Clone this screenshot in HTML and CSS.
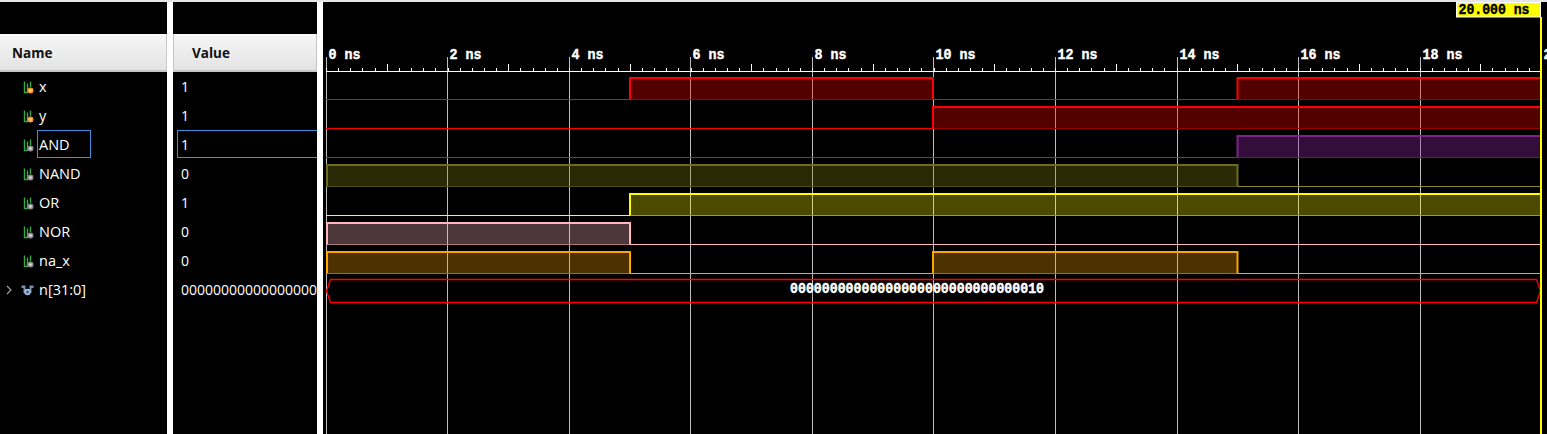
FILE: index.html
```html
<!DOCTYPE html>
<html>
<head>
<meta charset="utf-8">
<title>Waveform</title>
<link rel="stylesheet" href="styles.css">
</head>
<body>
<div class="topbar"></div>
<div class="main">
  <div class="col names">
    <div class="pad"></div>
    <div class="hdr">Name</div>
    <ul class="rows">
      <li class="row n"><span class="exp"></span>
        <svg class="ico" viewBox="0 0 11 13" width="11" height="13"><path class="g" d="M1.5 0.5V11.5H4.5V2.5M7.5 0.5V6"/><circle class="oin" cx="7.5" cy="9.5" r="3"/><path class="vmark" d="M6.3 8.5 7.5 10.9 8.7 8.5"/></svg>
        <span class="nm">x</span></li>
      <li class="row n"><span class="exp"></span>
        <svg class="ico" viewBox="0 0 11 13" width="11" height="13"><path class="g" d="M1.5 0.5V11.5H4.5V2.5M7.5 0.5V6"/><circle class="oin" cx="7.5" cy="9.5" r="3"/><path class="vmark" d="M6.3 8.5 7.5 10.9 8.7 8.5"/></svg>
        <span class="nm">y</span></li>
      <li class="row n"><span class="exp"></span>
        <svg class="ico" viewBox="0 0 11 13" width="11" height="13"><path class="g" d="M1.5 0.5V11.5H4.5V2.5M7.5 0.5V6"/><circle class="oout" cx="7.5" cy="9.5" r="3"/><circle class="odot" cx="7.5" cy="9.5" r="1.3"/></svg>
        <span class="nm sel">AND</span></li>
      <li class="row n"><span class="exp"></span>
        <svg class="ico" viewBox="0 0 11 13" width="11" height="13"><path class="g" d="M1.5 0.5V11.5H4.5V2.5M7.5 0.5V6"/><circle class="oout" cx="7.5" cy="9.5" r="3"/><circle class="odot" cx="7.5" cy="9.5" r="1.3"/></svg>
        <span class="nm">NAND</span></li>
      <li class="row n"><span class="exp"></span>
        <svg class="ico" viewBox="0 0 11 13" width="11" height="13"><path class="g" d="M1.5 0.5V11.5H4.5V2.5M7.5 0.5V6"/><circle class="oout" cx="7.5" cy="9.5" r="3"/><circle class="odot" cx="7.5" cy="9.5" r="1.3"/></svg>
        <span class="nm">OR</span></li>
      <li class="row n"><span class="exp"></span>
        <svg class="ico" viewBox="0 0 11 13" width="11" height="13"><path class="g" d="M1.5 0.5V11.5H4.5V2.5M7.5 0.5V6"/><circle class="oout" cx="7.5" cy="9.5" r="3"/><circle class="odot" cx="7.5" cy="9.5" r="1.3"/></svg>
        <span class="nm">NOR</span></li>
      <li class="row n"><span class="exp"></span>
        <svg class="ico" viewBox="0 0 11 13" width="11" height="13"><path class="g" d="M1.5 0.5V11.5H4.5V2.5M7.5 0.5V6"/><circle class="oout" cx="7.5" cy="9.5" r="3"/><circle class="odot" cx="7.5" cy="9.5" r="1.3"/></svg>
        <span class="nm">na_x</span></li>
      <li class="row n"><span class="exp"><svg viewBox="0 0 6 10" width="6" height="10"><path class="chev" d="M1 1 5 5 1 9"/></svg></span>
        <svg class="ico bus" viewBox="0 0 13 11" width="13" height="11"><path class="bb" d="M0.5 0.5H4.5V6H8.5V0.5H12.5V3H10.5V8H2.5V3H0.5Z"/><circle class="bring" cx="6.5" cy="7" r="3.2"/><circle class="bdot" cx="6.5" cy="7" r="1.5"/></svg>
        <span class="nm">n[31:0]</span></li>
    </ul>
  </div>
  <div class="sep"></div>
  <div class="col values">
    <div class="pad"></div>
    <div class="hdr">Value</div>
    <ul class="rows">
      <li class="row"><span class="v">1</span></li>
      <li class="row"><span class="v">1</span></li>
      <li class="row"><span class="v sel">1</span></li>
      <li class="row"><span class="v">0</span></li>
      <li class="row"><span class="v">1</span></li>
      <li class="row"><span class="v">0</span></li>
      <li class="row"><span class="v">0</span></li>
      <li class="row"><span class="v">00000000000000000000000000000010</span></li>
    </ul>
  </div>
  <div class="sep"></div>
  <div class="wave">
    <svg class="wsvg" viewBox="323 2 1224 432" width="1224" height="432">
      <!-- grid -->
      <path class="grid" d="M326.5 57V434M447.5 57V434M569.5 57V434M690.5 57V434M812.5 57V434M933.5 57V434M1055.5 57V434M1177.5 57V434M1298.5 57V434M1420.5 57V434"/>
      <!-- ruler -->
      <rect class="rul" x="326" y="71" width="1215" height="1"/>
      <line class="tick" x1="326" y1="70" x2="1541" y2="70" stroke-dasharray="1 11.15"/>
      <line class="tickm" x1="386.75" y1="68" x2="1541" y2="68" stroke-dasharray="1 120.5"/>
      <text class="rl" x="328.5" y="58.5" textLength="32" lengthAdjust="spacingAndGlyphs">0 ns</text>
      <text class="rl" x="449.5" y="58.5" textLength="32" lengthAdjust="spacingAndGlyphs">2 ns</text>
      <text class="rl" x="571.5" y="58.5" textLength="32" lengthAdjust="spacingAndGlyphs">4 ns</text>
      <text class="rl" x="692.5" y="58.5" textLength="32" lengthAdjust="spacingAndGlyphs">6 ns</text>
      <text class="rl" x="814.5" y="58.5" textLength="32" lengthAdjust="spacingAndGlyphs">8 ns</text>
      <text class="rl" x="935.5" y="58.5" textLength="40" lengthAdjust="spacingAndGlyphs">10 ns</text>
      <text class="rl" x="1057.5" y="58.5" textLength="40" lengthAdjust="spacingAndGlyphs">12 ns</text>
      <text class="rl" x="1179.5" y="58.5" textLength="40" lengthAdjust="spacingAndGlyphs">14 ns</text>
      <text class="rl" x="1300.5" y="58.5" textLength="40" lengthAdjust="spacingAndGlyphs">16 ns</text>
      <text class="rl" x="1422.5" y="58.5" textLength="40" lengthAdjust="spacingAndGlyphs">18 ns</text>
      <text class="rl" x="1543.5" y="58.5" textLength="40" lengthAdjust="spacingAndGlyphs">20 ns</text>

      <!-- x -->
      <rect class="f-red" x="630" y="77" width="303" height="22"/>
      <rect class="f-red" x="1237.5" y="77" width="303.5" height="22"/>
      <path class="d-red" d="M630 99.5H933M1237.5 99.5H1541"/>
      <path class="l-red" d="M326 99.5H630M933 99.5H1237.5"/>
      <path class="h-red" d="M630 99.5V78H933V99.5M1237.5 99.5V78H1541"/>
      <!-- y -->
      <rect class="f-red" x="933" y="106" width="608" height="22"/>
      <path class="d-red" d="M933 128.5H1541"/>
      <path class="l-red" d="M326 128.5H933"/>
      <path class="h-red" d="M933 128.5V107H1541"/>
      <!-- AND -->
      <rect class="f-pur" x="1237.5" y="135" width="303.5" height="22"/>
      <path class="d-pur" d="M1237.5 157.5H1541"/>
      <path class="l-pur" d="M326 157.5H1237.5"/>
      <path class="h-pur" d="M1237.5 157.5V136H1541"/>
      <!-- NAND -->
      <rect class="f-olv" x="326" y="164" width="911.5" height="22"/>
      <path class="d-olv" d="M326 186.5H1237.5"/>
      <path class="l-olv" d="M1237.5 186.5H1541"/>
      <path class="h-olv" d="M327 186.5V165H1237.5V186.5"/>
      <!-- OR -->
      <rect class="f-yel" x="630" y="193" width="911" height="22"/>
      <path class="d-yel" d="M630 215.5H1541"/>
      <path class="l-yel" d="M326 215.5H630"/>
      <path class="h-yel" d="M630 215.5V194H1541"/>
      <!-- NOR -->
      <rect class="f-pnk" x="326" y="222" width="304" height="22"/>
      <path class="d-pnk" d="M326 244.5H630"/>
      <path class="l-pnk" d="M630 244.5H1541"/>
      <path class="h-pnk" d="M327 244.5V223H630V244.5"/>
      <!-- na_x -->
      <rect class="f-org" x="326" y="251" width="304" height="22"/>
      <rect class="f-org" x="933" y="251" width="304.5" height="22"/>
      <path class="d-org" d="M326 273.5H630M933 273.5H1237.5"/>
      <path class="l-org" d="M630 273.5H933M1237.5 273.5H1541"/>
      <path class="h-org" d="M327 273.5V252H630V273.5M933 273.5V252H1237.5V273.5"/>
      <!-- bus -->
      <polygon class="busw" points="326.5,291 330.5,279.5 1536.5,279.5 1540.5,291 1536.5,302.5 330.5,302.5"/>
      <text class="bt" x="790" y="293" textLength="254" lengthAdjust="spacingAndGlyphs">00000000000000000000000000000010</text>

      <!-- cursor -->
      <rect class="cur" x="1540" y="17" width="2" height="417"/>
      <rect class="curbox" x="1456.5" y="2.5" width="84" height="14.5"/>
      <text class="ct" x="1458.5" y="14" textLength="71" lengthAdjust="spacingAndGlyphs">20.000 ns</text>
    </svg>
  </div>
</div>
</body>
</html>
```

FILE: styles.css
```css
* { box-sizing: border-box; }
html, body { margin: 0; padding: 0; background: #000; }
body {
  width: 1547px;
  height: 434px;
  overflow: hidden;
  font-family: "Open Sans", "Noto Sans", sans-serif;
}
.topbar { height: 2px; background: #e6e6e6; }
.main { display: flex; height: 432px; }
.col { background: #000; overflow: hidden; }
.names { width: 167px; }
.values { width: 144px; }
.sep { width: 6px; background: #fff; }
.wave { flex: 1; overflow: hidden; }
.wsvg { display: block; }

.pad { height: 32px; }
.hdr {
  height: 38px;
  background: linear-gradient(#f6f6f6, #e3e3e3);
  border-top: 1px solid #fbfbfb;
  border-bottom: 2px solid #c6c6c6;
  font-weight: 700;
  font-size: 13.5px;
  color: #111;
  display: flex;
  align-items: center;
}
.names .hdr { padding-left: 12px; border-right: 1px solid #c8c8c8; }
.values .hdr { padding-left: 18px; border-left: 1px solid #c4c4c4; border-right: 1px solid #c4c4c4; }

.rows { list-style: none; margin: 0; padding: 0; }
.row {
  height: 29px;
  display: flex;
  align-items: center;
  color: #fff;
  font-size: 14px;
  white-space: nowrap;
}
.row.n { padding-left: 6px; font-size: 14.5px; }
.exp { width: 17px; display: flex; align-items: center; }
.ico { display: block; flex: none; margin-top: 1px; }
.ico.bus { margin-left: -2px; }
.nm {
  margin-left: 3px;
  align-self: flex-start;
  height: 28px;
  display: flex;
  align-items: center;
  padding: 0 2px 0 1px;
  border: 1px solid transparent;
}
.nm.sel { width: 54px; border-color: #3a8fe2; }

.v {
  margin-left: 4px;
  flex: 1;
  align-self: flex-start;
  height: 28px;
  display: flex;
  align-items: center;
  padding-left: 3px;
  border: 1px solid transparent;
  border-right: 0;
  overflow: hidden;
}
.v.sel { border-color: #3a8fe2; }

/* icons */
.g { fill: none; stroke: #38a84a; stroke-width: 1.4; }
.oin { fill: #f29a2a; }
.vmark { fill: none; stroke: #fff3d6; stroke-width: 0.9; }
.oout { fill: #8e8e8e; }
.odot { fill: #e4e4e4; }
.chev { fill: none; stroke: #a0a0a0; stroke-width: 1.2; }
.bb { fill: #6f8fb3; }
.bring { fill: #a9bcd2; }
.bdot { fill: #3d5f8e; }

/* waveform */
.grid { fill: none; stroke: #bcbcbc; stroke-width: 1; }
.rul { fill: #fff; }
.tick { stroke: #fff; stroke-width: 4; shape-rendering: crispEdges; }
.tickm { stroke: #fff; stroke-width: 8; shape-rendering: crispEdges; }
.rl, .bt, .ct {
  font-family: "Liberation Mono", "Courier New", monospace;
  font-weight: 700;
  font-size: 15px;
  stroke-width: 0.45;
  paint-order: stroke;
}
.rl { fill: #fff; stroke: #fff; }
.bt { fill: #fff; stroke: #fff; }
.ct { fill: #000; stroke: #000; }
.cur { fill: #ffff00; }
.curbox { fill: #ffff00; stroke: #fff; stroke-width: 1; }

.l-red, .l-pur, .l-olv, .l-yel, .l-pnk, .l-org,
.d-red, .d-pur, .d-olv, .d-yel, .d-pnk, .d-org { fill: none; stroke-width: 1; }
.h-red, .h-pur, .h-olv, .h-yel, .h-pnk, .h-org { fill: none; stroke-width: 2; }

.f-red { fill: rgba(255, 0, 0, 0.32); }
.l-red, .h-red { stroke: #ff0000; }
.d-red { stroke: #9a0000; }

.f-pur { fill: rgba(150, 40, 170, 0.35); }
.l-pur { stroke: #86208f; }
.h-pur { stroke: #7e2489; }
.d-pur { stroke: #5e1a66; }

.f-olv { fill: rgba(128, 128, 20, 0.33); }
.l-olv { stroke: #8a8a26; }
.h-olv { stroke: #6c6c1c; }
.d-olv { stroke: #4c4c14; }

.f-yel { fill: rgba(255, 255, 0, 0.29); }
.l-yel, .h-yel { stroke: #ffff00; }
.d-yel { stroke: #9c9c28; }

.f-pnk { fill: rgba(255, 182, 193, 0.3); }
.l-pnk, .h-pnk { stroke: #ffb6c1; }
.d-pnk { stroke: #a87a82; }

.f-org { fill: rgba(255, 165, 0, 0.3); }
.l-org, .h-org { stroke: #ffa500; }
.d-org { stroke: #a86e00; }

.busw { fill: none; stroke: #ff0000; stroke-width: 1.3; }
```
